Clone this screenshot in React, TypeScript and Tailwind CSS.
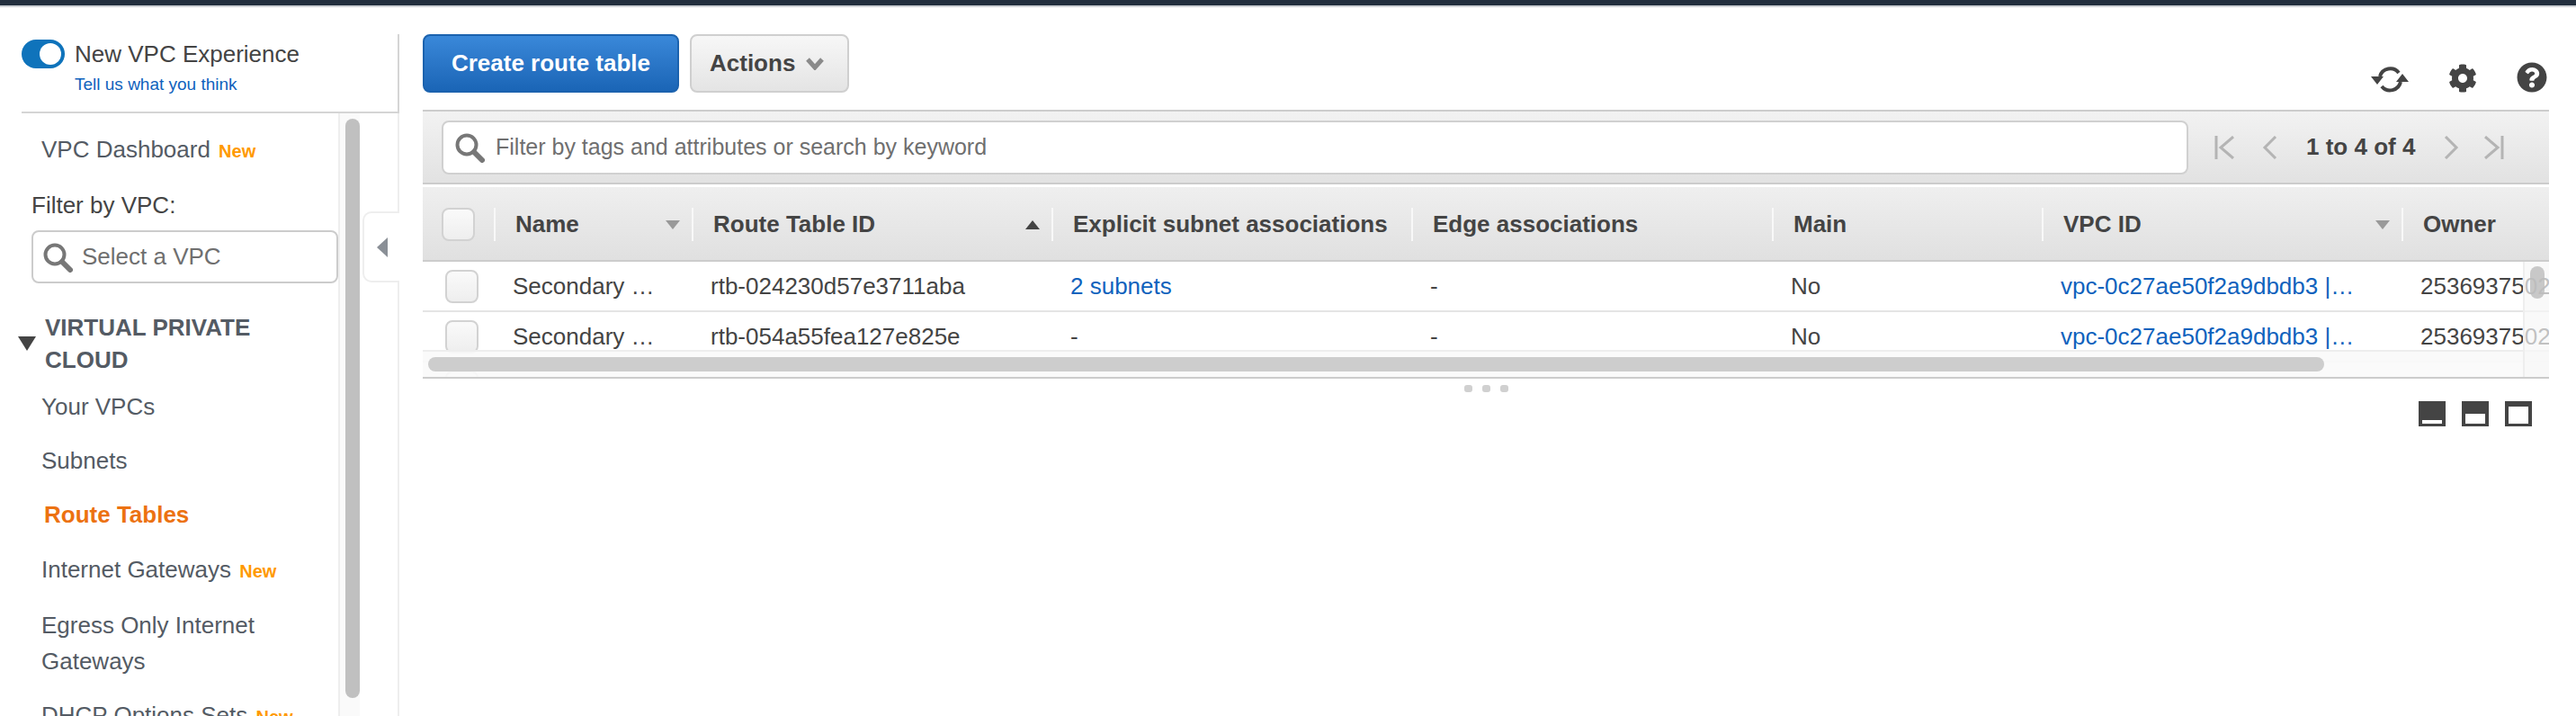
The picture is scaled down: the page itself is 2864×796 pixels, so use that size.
import { FaCog, FaQuestionCircle } from "react-icons/fa";

const font = "font-['Liberation_Sans',Arial,sans-serif]";

function SearchIcon({ className }: { className: string }) {
  return (
    <svg viewBox="0 0 34 34" className={className}>
      <circle cx="14" cy="14" r="10.5" fill="none" stroke="#777" strokeWidth="4" />
      <path d="M22 22 L31 31" stroke="#777" strokeWidth="6" strokeLinecap="round" />
    </svg>
  );
}

function NewTag({ className = "" }: { className?: string }) {
  return <span className={`text-[20px] font-bold text-[#ff9900] ${className}`}>New</span>;
}

function NavLink({ children, className = "" }: { children: React.ReactNode; className?: string }) {
  return <div className={`pl-[46px] py-[10px] text-[26px] leading-[40px] text-[#545b64] ${className}`}>{children}</div>;
}

function SortArrow({ up = false, className = "" }: { up?: boolean; className?: string }) {
  return (
    <svg viewBox="0 0 16 10" className={`h-[10px] w-[16px] ${className}`}>
      <path d={up ? "M8 0 L16 10 L0 10 Z" : "M0 0 L16 0 L8 10 Z"} fill={up ? "#444" : "#999"} />
    </svg>
  );
}

function Checkbox({ className = "" }: { className?: string }) {
  return <div className={`h-[37px] w-[37px] rounded-[8px] border-2 border-[#d2d2d2] bg-gradient-to-b from-[#fafafa] to-[#eeeeee] ${className}`} />;
}

function HeaderCell({
  width,
  label,
  arrow,
  clip = false,
}: {
  width: string;
  label: string;
  arrow?: "up" | "down";
  clip?: boolean;
}) {
  return (
    <div className={`flex h-[37px] shrink-0 items-center border-l-2 border-[#f8f8f8] pl-[22px] ${width}`}>
      <span className={`text-[26px] font-bold whitespace-nowrap text-[#444] ${clip ? "w-[356px] overflow-hidden" : "flex-1"}`}>{label}</span>
      {arrow && <SortArrow up={arrow === "up"} className="mr-[13px]" />}
    </div>
  );
}

function Cell({ width, children, link = false }: { width: string; children: React.ReactNode; link?: boolean }) {
  return (
    <div className={`shrink-0 overflow-hidden pl-[21px] text-[26px] whitespace-nowrap ${link ? "text-[#0f62bd]" : "text-[#444]"} ${width}`}>
      {children}
    </div>
  );
}

const rows = [
  { name: "Secondary …", id: "rtb-024230d57e3711aba", explicit: "2 subnets" },
  { name: "Secondary …", id: "rtb-054a55fea127e825e", explicit: "-" },
  { name: "Secondary …", id: "rtb-0a4f23c91de7706b2", explicit: "-" },
];

function PagerIcon({ d }: { d: string }) {
  return (
    <svg viewBox="0 0 24 26" className="h-[26px] w-[24px]">
      <path d={d} fill="none" stroke="#b4b4b4" strokeWidth="3" />
    </svg>
  );
}

function PanelIcon({ d }: { d: string }) {
  return (
    <svg viewBox="0 0 30 28" className="h-[28px] w-[30px]">
      <rect width="30" height="28" fill="#444" />
      <path d={d} fill="#fff" />
    </svg>
  );
}

export default function App() {
  return (
    <div className={`${font} h-[796px] w-[2864px] overflow-hidden bg-white`}>
      <div className="h-[8px] border-b-2 border-[#cfd2d6] bg-[#232f3e]" />
      <div className="flex h-[788px]">
        <aside className="relative mt-[30px] w-[444px] shrink-0 border-r-2 border-[#eeeeee]">
          <div className="ml-[24px] -mr-[2px] h-[88px] border-r-2 border-b-2 border-[#d5d5d5]">
            <div className="flex items-center gap-[11px] pt-[6px]">
              <div className="flex h-[32px] w-[48px] items-center justify-end rounded-full bg-[#0f73bb] pr-[4px]">
                <div className="h-[24px] w-[24px] rounded-full bg-white" />
              </div>
              <span className="text-[26px] leading-[32px] text-[#444]">New VPC Experience</span>
            </div>
            <div className="pt-[6px] pl-[59px] text-[19px] leading-[24px] text-[#0f62bd]">Tell us what you think</div>
          </div>
          <div className="flex h-[670px] pt-[20px]">
            <nav className="w-[376px] shrink-0">
              <div className="pl-[46px] text-[26px] leading-[40px] text-[#545b64]">
                VPC Dashboard <NewTag className="ml-[2px]" />
              </div>
              <div className="mt-[20px] pl-[35px] text-[26px] leading-[40px] text-[#444]">Filter by VPC:</div>
              <div className="mt-[8px] ml-[35px] flex h-[59px] w-[341px] items-center gap-[10px] rounded-[8px] border-2 border-[#cccccc] pl-[10px]">
                <SearchIcon className="h-[34px] w-[34px]" />
                <span className="text-[26px] text-[#6f6f6f]">Select a VPC</span>
              </div>
              <div className="mt-[31px] flex items-center gap-[10px] pl-[20px]">
                <svg viewBox="0 0 20 16" className="h-[16px] w-[20px] shrink-0">
                  <path d="M0 0 L20 0 L10 16 Z" fill="#444" />
                </svg>
                <div className="w-[300px] text-[26px] leading-[36px] font-bold text-[#545b64]">VIRTUAL PRIVATE CLOUD</div>
              </div>
              <NavLink className="mt-[4px]">Your VPCs</NavLink>
              <NavLink>Subnets</NavLink>
              <NavLink className="pl-[49px] font-bold text-[#ec7211]">Route Tables</NavLink>
              <NavLink className="mt-[1px]">
                Internet Gateways <NewTag className="ml-[2px]" />
              </NavLink>
              <NavLink>Egress Only Internet Gateways</NavLink>
              <NavLink>
                DHCP Options Sets <NewTag className="ml-[2px]" />
              </NavLink>
            </nav>
            <div className="-mt-[20px] h-[680px] w-[24px] border-l-2 border-[#eeeeee] bg-[#fafafa] pt-[6px] pl-[6px]">
              <div className="h-[644px] w-[16px] rounded-full bg-[#c0c0c0]" />
            </div>
          </div>
          {/* collapse tab sits over the sidebar's right edge */}
          <div className="absolute top-[197px] -right-[2px] flex h-[79px] w-[41px] items-center justify-center rounded-l-[10px] border-2 border-r-0 border-[#eeeeee] bg-white">
            <svg viewBox="0 0 12 22" className="h-[22px] w-[12px]">
              <path d="M12 0 L12 22 L0 11 Z" fill="#8a8f96" />
            </svg>
          </div>
        </aside>

        <main className="ml-[26px] w-[2364px] shrink-0">
          <div className="mt-[30px] flex h-[65px] items-stretch justify-between">
            <div className="flex gap-[12px]">
              <button className="w-[285px] rounded-[8px] border-2 border-[#1b62ae] bg-gradient-to-b from-[#3a88d9] to-[#1a65b6] text-[26px] font-bold text-white">
                Create route table
              </button>
              <button className="flex w-[177px] items-center gap-[12px] rounded-[8px] border-2 border-[#cfcfcf] bg-gradient-to-b from-[#f7f7f7] to-[#e4e4e4] pl-[20px] text-[26px] font-bold text-[#444]">
                Actions
                <svg viewBox="0 0 20 14" className="h-[14px] w-[20px]">
                  <path d="M2 2 L10 11 L18 2" fill="none" stroke="#8a8a8a" strokeWidth="5" />
                </svg>
              </button>
            </div>
            <div className="flex items-end gap-[44px] pr-[2px]">
              <svg viewBox="0 0 42 34" className="-mb-[2px] h-[34px] w-[42px]">
                <path d="M10 14 A12 12 0 0 1 31 10" fill="none" stroke="#444" strokeWidth="4" />
                <path d="M33 20 A12 12 0 0 1 12 25" fill="none" stroke="#444" strokeWidth="4" />
                <path d="M0 14 L14 14 L7 23 Z M42 20 L28 20 L35 11 Z" fill="#444" />
              </svg>
              <FaCog className="h-[32px] w-[32px] text-[#444]" />
              <FaQuestionCircle className="h-[34px] w-[34px] text-[#444]" />
            </div>
          </div>

          <section className="mt-[19px]">
            <div className="flex h-[83px] items-center border-y-2 border-[#cccccc] bg-gradient-to-b from-[#f2f2f2] to-[#e2e2e2] pl-[21px]">
              <div className="flex h-[60px] w-[1942px] items-center gap-[12px] rounded-[8px] border-2 border-[#d0d0d0] bg-white pl-[12px]">
                <SearchIcon className="h-[34px] w-[34px]" />
                <span className="text-[25px] text-[#6f6f6f]">Filter by tags and attributes or search by keyword</span>
              </div>
              <div className="ml-[28px] flex items-center text-[26px] font-bold text-[#444]">
                <PagerIcon d="M3 0 L3 26 M22 1 L8 13 L22 25" />
                <span className="ml-[27px]"><PagerIcon d="M18 1 L6 13 L18 25" /></span>
                <span className="mx-[28px] whitespace-nowrap">1 to 4 of 4</span>
                <PagerIcon d="M6 1 L18 13 L6 25" />
                <span className="ml-[24px]"><PagerIcon d="M2 1 L16 13 L2 25 M21 0 L21 26" /></span>
              </div>
            </div>
            <div className="mt-[3px] flex h-[83px] items-start overflow-hidden border-b-2 border-[#cccccc] bg-gradient-to-b from-[#efefef] to-[#e0e0e0] pt-[23px]">
              <div className="w-[79px] shrink-0 pl-[21px]"><Checkbox /></div>
              <HeaderCell width="w-[220px]" label="Name" arrow="down" />
              <HeaderCell width="w-[400px]" label="Route Table ID" arrow="up" />
              <HeaderCell width="w-[400px]" label="Explicit subnet associations" clip />
              <HeaderCell width="w-[401px]" label="Edge associations" />
              <HeaderCell width="w-[300px]" label="Main" />
              <HeaderCell width="w-[400px]" label="VPC ID" arrow="down" />
              <HeaderCell width="w-[164px]" label="Owner" />
            </div>
            <div className="relative h-[130px] overflow-hidden border-b-2 border-[#cccccc]">
              {rows.map((row) => (
                <div key={row.id} className="flex h-[56px] items-center border-b-2 border-[#e4e4e4]">
                  <div className="w-[79px] shrink-0 pl-[25px]"><Checkbox /></div>
                  <Cell width="w-[220px]">{row.name}</Cell>
                  <Cell width="w-[400px]">{row.id}</Cell>
                  <Cell width="w-[400px]" link={row.explicit !== "-"}>{row.explicit}</Cell>
                  <Cell width="w-[401px]">-</Cell>
                  <Cell width="w-[300px]">No</Cell>
                  <Cell width="w-[400px]" link>vpc-0c27ae50f2a9dbdb3 |…</Cell>
                  <Cell width="w-[164px]">253693750227</Cell>
                </div>
              ))}
              {/* scrollbars float over the rows */}
              <div className="absolute right-0 bottom-0 left-0 h-[30px] border-t-2 border-[#eeeeee] bg-[#f9f9f9]/90 pt-[6px] pl-[6px]">
                <div className="h-[16px] w-[2108px] rounded-full bg-[#cdcdcd]" />
              </div>
              <div className="absolute top-0 right-0 bottom-0 w-[29px] border-l-2 border-[#eeeeee] bg-[#f7f7f7]/70 pt-[5px] pl-[6px]">
                <div className="h-[36px] w-[16px] rounded-full bg-[#bbbbbb]/80" />
              </div>
            </div>
          </section>

          <div className="mt-[7px] flex justify-center gap-[11px]">
            <div className="h-[8px] w-[9px] rounded-[3px] bg-[#d0d0d0]" />
            <div className="h-[8px] w-[9px] rounded-[3px] bg-[#d0d0d0]" />
            <div className="h-[8px] w-[9px] rounded-[3px] bg-[#d0d0d0]" />
          </div>
          <div className="mt-[10px] flex justify-end gap-[18px] pr-[19px]">
            <PanelIcon d="M4 21 H26 V25 H4 Z" />
            <PanelIcon d="M4 14 H26 V25 H4 Z" />
            <PanelIcon d="M4 6 H26 V25 H4 Z" />
          </div>
        </main>
      </div>
    </div>
  );
}
